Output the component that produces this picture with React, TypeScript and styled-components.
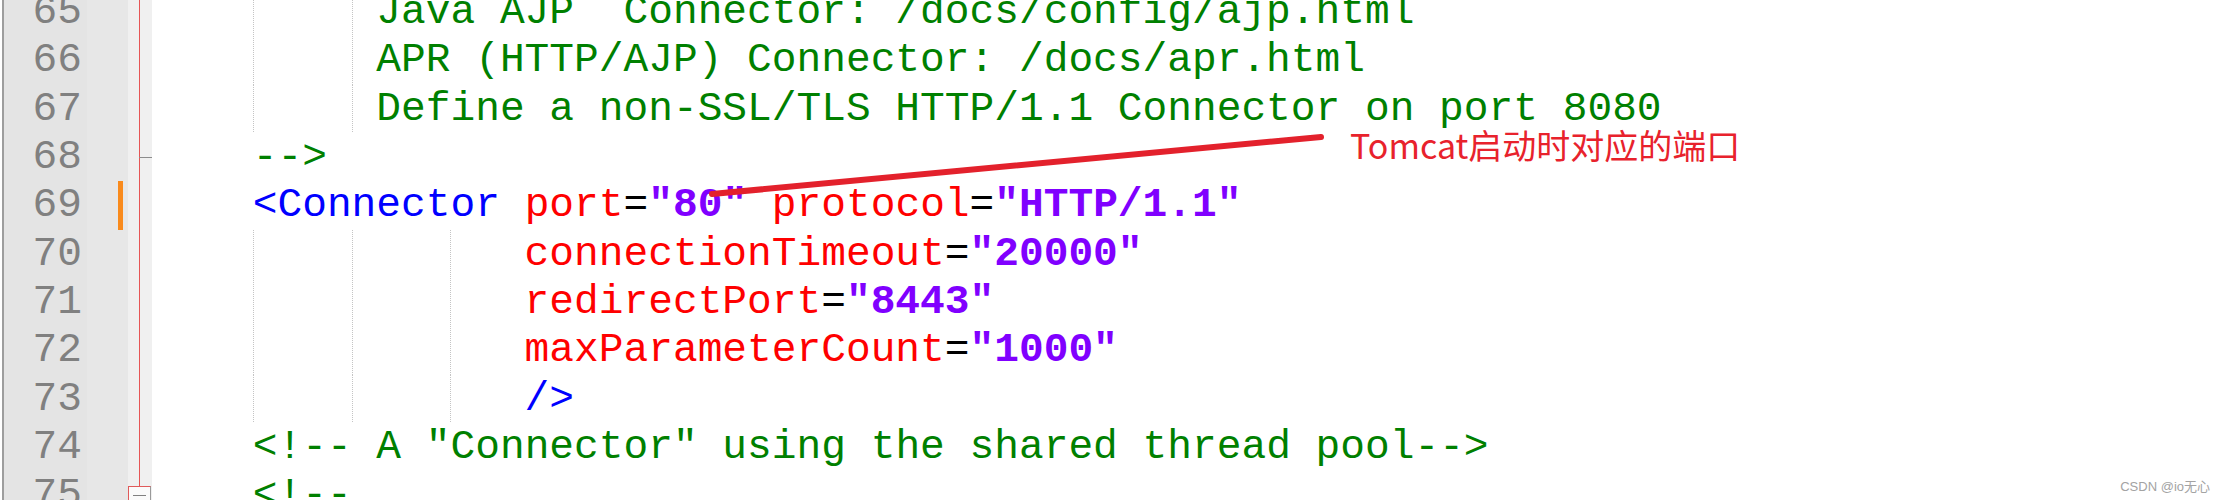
import React from "react";
import styled, { createGlobalStyle, css } from "styled-components";

const LINE_H = 48.33;
const FIRST_OFFSET = -12;

type Kind = "comment" | "tag" | "attr" | "eq" | "value" | "plain";
type Token = [Kind, string];
type CodeLine = { n: number; indent: number; tokens: Token[]; changed?: boolean; fold?: "end" | "open" };

const lines: CodeLine[] = [
  { n: 65, indent: 9, tokens: [["comment", "Java AJP  Connector: /docs/config/ajp.html"]] },
  { n: 66, indent: 9, tokens: [["comment", "APR (HTTP/AJP) Connector: /docs/apr.html"]] },
  { n: 67, indent: 9, tokens: [["comment", "Define a non-SSL/TLS HTTP/1.1 Connector on port 8080"]] },
  { n: 68, indent: 4, tokens: [["comment", "-->"]], fold: "end" },
  {
    n: 69,
    indent: 4,
    changed: true,
    tokens: [
      ["tag", "<Connector"],
      ["plain", " "],
      ["attr", "port"],
      ["eq", "="],
      ["value", '"80"'],
      ["plain", " "],
      ["attr", "protocol"],
      ["eq", "="],
      ["value", '"HTTP/1.1"'],
    ],
  },
  { n: 70, indent: 15, tokens: [["attr", "connectionTimeout"], ["eq", "="], ["value", '"20000"']] },
  { n: 71, indent: 15, tokens: [["attr", "redirectPort"], ["eq", "="], ["value", '"8443"']] },
  { n: 72, indent: 15, tokens: [["attr", "maxParameterCount"], ["eq", "="], ["value", '"1000"']] },
  { n: 73, indent: 15, tokens: [["tag", "/>"]] },
  { n: 74, indent: 4, tokens: [["comment", '<!-- A "Connector" using the shared thread pool-->']] },
  { n: 75, indent: 4, tokens: [["comment", "<!--"]], fold: "open" },
];

const GlobalStyle = createGlobalStyle`
  html, body {
    margin: 0;
    padding: 0;
    background: #ffffff;
    overflow: hidden;
  }
  #root {
    width: 2229px;
    height: 500px;
  }
`;

const Window = styled.div`
  position: relative;
  display: flex;
  width: 2229px;
  height: 500px;
  overflow: hidden;
  background: #ffffff;
  font-family: "Liberation Mono", "DejaVu Sans Mono", monospace;
  font-size: 41.2px;
  line-height: ${LINE_H}px;
`;

const Gutter = styled.div`
  display: flex;
  flex: none;
  margin-left: 2px;
  border-left: 2px solid #9d9d9d;
`;

const Lines = styled.div`
  margin-top: ${FIRST_OFFSET}px;
`;

const NumberColumn = styled.div`
  width: 83px;
  box-sizing: border-box;
  padding-right: 5px;
  background: #e4e4e4;
  color: #808080;
  text-align: right;
`;

const NumberCell = styled.div`
  height: ${LINE_H}px;
`;

const MarkerColumn = styled.div`
  width: 41px;
  background: #e7e7e7;
`;

const MarkerCell = styled.div`
  display: flex;
  height: ${LINE_H}px;
`;

const ChangeBar = styled.div`
  width: 5px;
  margin-left: 31px;
  background: #f98a1c;
`;

const FoldColumn = styled.div`
  width: 24px;
  background: linear-gradient(#e65555, #e65555) 11px 0 / 1px 100% no-repeat, #f0f0f0;
`;

const FoldCell = styled.div`
  display: flex;
  align-items: center;
  height: ${LINE_H}px;
`;

const FoldTick = styled.div`
  flex: 1;
  height: 1px;
  margin-left: 11px;
  background: #8c8c8c;
`;

const FoldBox = styled.div`
  display: flex;
  align-items: center;
  justify-content: center;
  width: 23px;
  height: 19px;
  box-sizing: border-box;
  border: 1px solid #e05a5a;
  border-right-color: #9a9a9a;
  background: #fafafa;
`;

const Minus = styled.div`
  width: 13px;
  height: 1px;
  background: #808080;
`;

const Editor = styled.div`
  flex: 1;
  padding-left: 1.9px;
  min-width: 0;
`;

const Row = styled.div`
  display: flex;
  height: ${LINE_H}px;
  white-space: pre;
`;

const Indent = styled.span<{ $cols: number; $guide: boolean }>`
  flex: none;
  width: ${(p) => p.$cols}ch;
  ${(p) =>
    p.$guide &&
    css`
      background: repeating-linear-gradient(to bottom, #c4c4c4 0 1px, transparent 1px 2px) 0 0 / 1px 100% no-repeat;
    `}
`;

const Code = styled.span`
  display: block;
`;

const palette: Record<Kind, { color: string; weight: number }> = {
  comment: { color: "#008000", weight: 400 },
  tag: { color: "#0000ff", weight: 400 },
  attr: { color: "#ff0000", weight: 400 },
  eq: { color: "#000000", weight: 400 },
  value: { color: "#8000ff", weight: 700 },
  plain: { color: "#000000", weight: 400 },
};

const Tok = styled.span<{ $kind: Kind }>`
  color: ${(p) => palette[p.$kind].color};
  font-weight: ${(p) => palette[p.$kind].weight};
`;

const Overlay = styled.svg`
  position: absolute;
  left: 0;
  top: 0;
  width: 2229px;
  height: 500px;
  pointer-events: none;
`;

const Label = styled.div`
  position: absolute;
  left: 1350px;
  top: 128px;
  font-family: "Noto Sans CJK SC", "Noto Sans", sans-serif;
  font-size: 34px;
  line-height: 34px;
  color: #e8222c;
  white-space: nowrap;
`;

const Watermark = styled.div`
  position: absolute;
  right: 19px;
  bottom: 5px;
  font-family: "Liberation Sans", "Noto Sans CJK SC", sans-serif;
  font-size: 13px;
  line-height: 16px;
  color: #a3a3a3;
`;

function indentSegments(indent: number) {
  const segs: { cols: number; guide: boolean }[] = [];
  const first = Math.min(4, indent);
  if (first > 0) segs.push({ cols: first, guide: false });
  for (let c = 4; c < indent; c += 4) {
    segs.push({ cols: Math.min(4, indent - c), guide: true });
  }
  return segs;
}

export default function App() {
  return (
    <>
      <GlobalStyle />
      <Window>
        <Gutter>
          <NumberColumn>
            <Lines>
              {lines.map((l) => (
                <NumberCell key={l.n}>{l.n}</NumberCell>
              ))}
            </Lines>
          </NumberColumn>
          <MarkerColumn>
            <Lines>
              {lines.map((l) => (
                <MarkerCell key={l.n}>{l.changed && <ChangeBar />}</MarkerCell>
              ))}
            </Lines>
          </MarkerColumn>
          <FoldColumn>
            <Lines>
              {lines.map((l) => (
                <FoldCell key={l.n}>
                  {l.fold === "end" && <FoldTick />}
                  {l.fold === "open" && (
                    <FoldBox>
                      <Minus />
                    </FoldBox>
                  )}
                </FoldCell>
              ))}
            </Lines>
          </FoldColumn>
        </Gutter>
        <Editor>
          <Lines>
            {lines.map((l) => (
              <Row key={l.n}>
                {indentSegments(l.indent).map((s, i) => (
                  <Indent key={i} $cols={s.cols} $guide={s.guide} />
                ))}
                <Code>
                  {l.tokens.map(([k, s], i) => (
                    <Tok key={i} $kind={k}>
                      {s}
                    </Tok>
                  ))}
                </Code>
              </Row>
            ))}
          </Lines>
        </Editor>
        <Overlay viewBox="0 0 2229 500">
          <line x1="712" y1="194" x2="1321" y2="137" stroke="#e3212c" strokeWidth="6" strokeLinecap="round" />
        </Overlay>
        <Label>Tomcat启动时对应的端口</Label>
        <Watermark>CSDN @io无心</Watermark>
      </Window>
    </>
  );
}
